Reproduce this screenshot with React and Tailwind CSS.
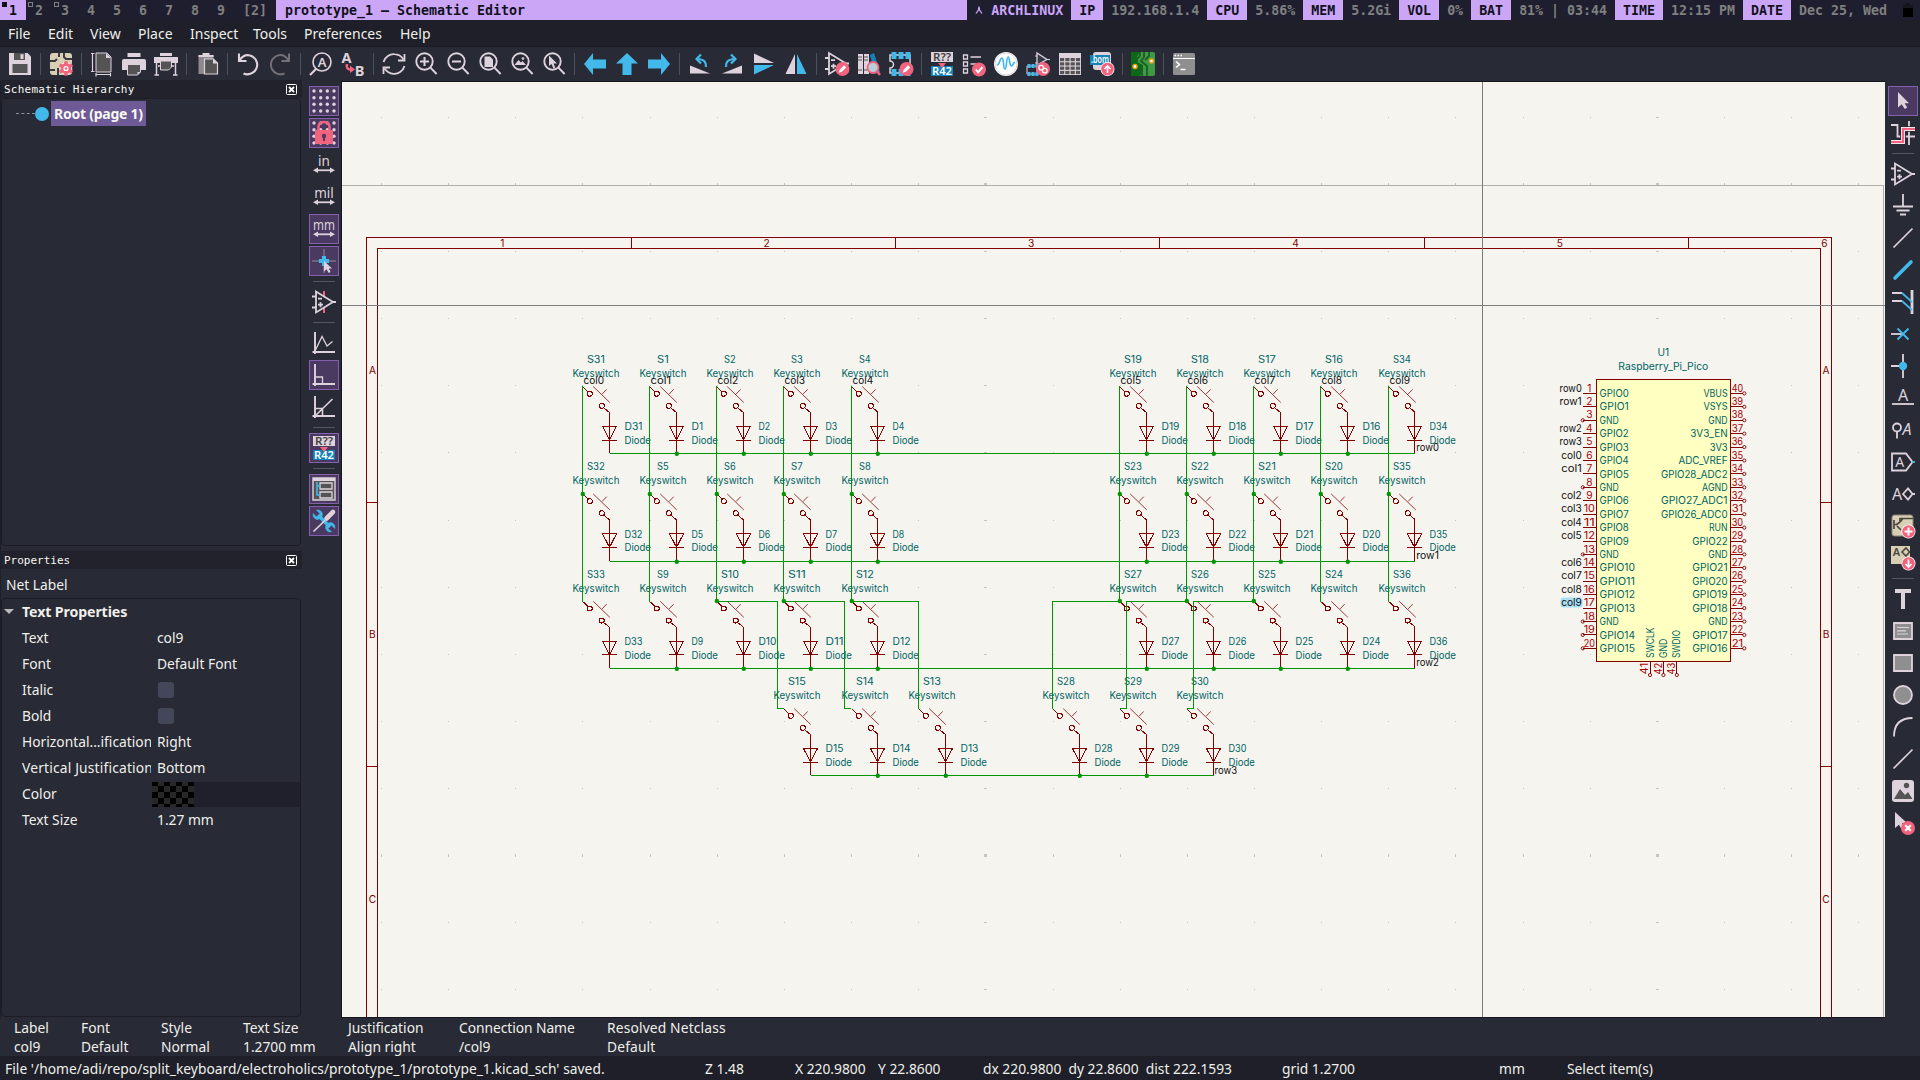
import React from "react";

const L = "#ded3dd";
const R = "#f2647e";
const B = "#42b8eb";
const G = "#545454";
const M = "#8f8f8f";

const Svg = ({ children }) => (
  <svg width="24" height="24" viewBox="0 0 24 24" fill="none" className="block shrink-0 overflow-visible">
    {children}
  </svg>
);
const T = ({ x, y, s = 10, f = L, w = 400, len, i, children }) => (
  <text x={x} y={y} fontSize={s} fill={f} fontWeight={w} textAnchor="middle" fontStyle={i ? "italic" : "normal"} fontFamily='"Noto Sans", sans-serif' textLength={len} lengthAdjust="spacingAndGlyphs">
    {children}
  </text>
);
const Badge = ({ x = 18, y = 18, ring, children }) => (
  <g transform={`translate(${x} ${y})`}>
    <circle r="7" fill={ring ? "#fff" : R} />
    {ring && <circle r="6.3" fill={R} />}
    <g stroke="#fff" strokeWidth="2">{children}</g>
  </g>
);
const Pencil = () => (
  <g>
    <path d="M-2 2L2.6-2.6" strokeWidth="3" />
    <path d="M-3.8 3.8L-2.8 .8L-.8 2.8Z" fill="#fff" stroke="none" />
  </g>
);
const OpAmp = () => (
  <g stroke={L} strokeWidth="1.8">
    <path d="M4 1.5V22.5L21 12Z" />
    <path d="M0 6.5H4M0 17.5H4M20 12H24M6 8.7H10M6 14.7H11M8.5 12.2V17.2" />
  </g>
);
const Lens = ({ children }) => (
  <g>
    <circle cx="10.5" cy="9.5" r="8.2" stroke={L} strokeWidth="1.9" />
    <path d="M16.2 15.4L22.6 22" stroke={L} strokeWidth="2" />
    {children}
  </g>
);
const Annot = () => (
  <g>
    <rect x="1" y="0" width="22" height="10" fill={L} />
    <T x="12" y="9" s="10.5" f="#444" w={600} len="18">R??</T>
    <rect x="1" y="14" width="22" height="10" fill="#1482b8" />
    <T x="12" y="22.8" s="10.5" f="#fff" w={600} len="20">R42</T>
    <path d="M8 11H16L12 16Z" fill={R} />
  </g>
);
const Foot = () => (
  <g>
    <path d="M2 3H22V21H2V16A3.5 3.5 0 0 0 2 9Z" stroke={L} strokeWidth="1.5" fill="#282a36" transform="translate(-1 0)" />
    {[2.5, 9.5, 16.5].map((x) => <path key={x} d={`M${x} 0h5v7h-5zM${x} 17h5v7h-5z`} fill={B} />)}
  </g>
);
const Units = ({ children, len }) => (
  <g>
    <T x="12" y="13" s="13.5" len={len}>{children}</T>
    <path d="M4 17.3H20" stroke={L} strokeWidth="1.8" />
    <path d="M1 17.3L6 14.5V20ZM23 17.3L18 14.5V20Z" fill={L} />
  </g>
);
const dots = [2, 8.7, 15.3, 22];
const Grid = () => dots.map((x) => dots.map((y) => <circle key={x + "-" + y} cx={x} cy={y} r="1.7" fill={L} />));
const Axes = () => <path d="M3 1V23M.5 21H23" stroke={L} strokeWidth="1.9" />;

const icons = {
  save: <g><path d="M1 1H19.5L23 4.5V23H1Z" fill={L} /><path d="M6 1H17V8H6Z" fill={G} /><path d="M12.5 2.2H15.5V7H12.5Z" fill={L} /><path d="M4.5 12H19.5V21H4.5Z" fill={G} /></g>,
  setup: <g><rect x="1" y="1" width="22" height="22" rx="3" fill="#d9cfb5" /><path d="M10 1V5M1 9H6L8 7M15 1V5L17 7H23M9 16V23M1 18H6" stroke="#3a3a3a" strokeWidth="2" /><g transform="translate(17 16.5)"><circle r="5.8" fill={R} stroke="#fff" strokeWidth="1" />{[0, 60, 120, 180, 240, 300].map((a) => <rect key={a} x="-1.8" y="-7.3" width="3.6" height="4" rx=".8" fill={R} transform={`rotate(${a})`} />)}<circle r="2.6" fill="#fff" /><circle r="1.2" fill={R} /></g></g>,
  page: <g><path d="M6 1H17L21 5V20H6Z" fill={G} stroke={L} strokeWidth="1" /><path d="M16 1V6H21Z" fill={L} /><path d="M2.5 1V20M1 1.5H4.5M1 19.5H4.5M6 22.5H20.5M6 21V24.5M20.5 21V24.5" stroke={L} strokeWidth="1.2" /></g>,
  print: <g><path d="M5.5 1H18.5V5H5.5Z" fill={L} /><path d="M2 7H22Q24 7 24 9V18H0V9Q0 7 2 7Z" fill={L} /><path d="M5.5 12.5H18.5V20L15.5 23H5.5Z" fill={G} stroke={L} /><path d="M15.5 23V20H18.5Z" fill={L} /></g>,
  plot: <g><path d="M6 1H18V4H6ZM0 5H24V11H0Z" fill={L} /><path d="M6.5 9H17.5V15L14.5 18H6.5Z" fill={G} stroke={L} /><path d="M2.5 10V23M21.5 10V23M.5 23H5M19 23H23.5M4 14H6M18 14H20" stroke={L} strokeWidth="1.5" /></g>,
  paste: <g transform="translate(1.5 0)"><path d="M2 3H17V22H2Z" fill="#8d898f" /><path d="M6 1H13V4H6Z" fill={L} /><path d="M2 3H17V5H2Z" fill={L} /><path d="M8 7H17L21 11V22H8Z" fill={G} stroke={L} strokeWidth="1.2" /><path d="M16.5 7V11.5H21Z" fill={L} /></g>,
  undo: <g stroke={L} strokeWidth="2.1"><path d="M3 1.5V9H10.5" /><path d="M3.4 8.5C7 3 12 2 16.5 4.5C21 7.5 22.5 13 20 17.2C17.5 21.8 12 23.5 7.5 21.5" /></g>,
  redo: <g stroke="#737078" strokeWidth="2"><path d="M21 1.5V9H13.5" /><path d="M20.6 8.5C17 3 12 2 7.5 4.5C3 7.5 1.5 13 4 17.2C6.5 21.8 12 23.5 16.5 21.5" /></g>,
  find: <g><circle cx="13" cy="10" r="9" stroke={L} strokeWidth="1.6" /><path d="M7 17L1 23" stroke={L} strokeWidth="2.2" /><T x="13" y="14.5" s="13" w={600}>A</T></g>,
  replace: <g><T x="5.5" y="10.5" s="14.5" w={700}>A</T><T x="18.5" y="23.5" s="14.5" w={700}>B</T><path d="M6 12C5 17 8 18 11 17.5" stroke={R} strokeWidth="2.5" /><path d="M9 13.5L14 17.5L9 21Z" fill={R} /></g>,
  refresh: <g stroke={L} strokeWidth="1.8"><path d="M1.5 10C3 4.5 8 1.8 12.5 2.2C16.5 2.4 19.5 4.5 21.5 7.5M22.5 14C21 19.5 16 22.2 11.5 21.8C7.5 21.6 4.5 19.5 2.5 16.5" /><path d="M22.5 2V8.5H16M1.5 22V15.5H8" /></g>,
  zin: <Lens><path d="M6 9.5H15M10.5 5V14" stroke={L} strokeWidth="2" /></Lens>,
  zout: <Lens><path d="M6 9.5H15" stroke={L} strokeWidth="2" /></Lens>,
  zfit: <Lens><path d="M6.5 4.5H12L15 7.5V15H6.5Z" fill={L} /></Lens>,
  zobj: <Lens><path d="M4.5 13L8.5 8L11 10.5L12.5 9L16 13Z" fill={L} /><circle cx="13" cy="6.5" r="1.3" fill={L} /></Lens>,
  zsel: <Lens><path d="M7 3.5V14L9.5 12L11.5 16.5L13.3 15.6L11.4 11.5H15Z" fill={L} /></Lens>,
  left: <path d="M1 12L10 1V7.5H23V16.5H10V23Z" fill={B} />,
  up: <path d="M12 1L23 11.5H16.5V23H7.5V11.5H1Z" fill={B} />,
  right: <path d="M23 12L14 1V7.5H1V16.5H14V23Z" fill={B} />,
  rccw: <g><path d="M2 13.5V21.5H22Z" fill={L} /><path d="M18 15C18.5 10.5 16 7 9.5 7" stroke={B} strokeWidth="2.2" /><path d="M13 2.5L8.5 7L13 11.5" stroke={B} strokeWidth="2.2" /></g>,
  rcw: <g><path d="M22 13.5V21.5H2Z" fill={L} /><path d="M6 15C5.5 10.5 8 7 14.5 7" stroke={B} strokeWidth="2.2" /><path d="M11 2.5L15.5 7L11 11.5" stroke={B} strokeWidth="2.2" /></g>,
  mv: <g><path d="M2 1.5V11L22 11Z" fill={L} /><path d="M2 22.5V13L22 13Z" fill={B} /></g>,
  mh: <g><path d="M1.5 22V22L11 2V22Z" fill={L} /><path d="M22.5 22L13 2V22Z" fill={B} /></g>,
  symed: <g><g transform="translate(0 -.5)"><OpAmp /></g><Badge x={17.5} y={17}><Pencil /></Badge></g>,
  lib: <g><path d="M1 2H6V22H1ZM7 2H12V22H7Z" fill={L} /><path d="M1 5H5M1 8H5M1 18H5M7 5H11M7 8H11M7 18H11" stroke={G} strokeWidth="1.2" /><path d="M13 3L17 1L23 20L18 22Z" fill="#1482b8" /><path d="M19 18L23 23" stroke={R} strokeWidth="2.5" /><circle cx="16" cy="15.5" r="5.5" fill="#b9ced8" stroke={R} strokeWidth="1.8" /></g>,
  fped: <g><Foot /><Badge x={17.5} y={17}><Pencil /></Badge></g>,
  annot: <Annot />,
  erc: <g><path d="M1.5 3H5.5V7H1.5ZM1.5 10H5.5V14H1.5ZM1.5 17H5.5V21H1.5ZM8.5 5H19M8.5 12H14" stroke={L} strokeWidth="1.3" /><Badge x={17} y={17.5}><path d="M-3.2 0L-.8 2.8L3.5-2.5" /></Badge></g>,
  sim: <g><circle cx="12" cy="12" r="12" fill="#fff" /><circle cx="12" cy="12" r="11" stroke={L} strokeWidth="1" /><path d="M3 13C6 13 5.5 6 8 6C10 6 9 17 11 17C13 17 12 5 14.2 5C16 5 15 14 17.5 14C19 14 19 11 21 10" stroke={B} strokeWidth="1.7" /></g>,
  link: <g><path d="M11 1V13L21 7.5Z" fill="#343d47" stroke={L} strokeWidth="1.3" /><path d="M9 4H11M9 11H11M21 7.5H24" stroke={L} /><path d="M1 14H11V22H1Z" stroke={L} />{[1.5, 5.5, 9.5].map((x) => <path key={x} d={`M${x} 12h3v4h-3zM${x} 20h3v4h-3z`} fill={B} />)}<Badge x={17} y={17}><g strokeWidth="1.3"><rect x="-4" y="-3.6" width="4.5" height="4.5" rx="2" /><rect x="-.5" y="-.6" width="4.5" height="4.5" rx="2" /></g></Badge></g>,
  table: <g><path d="M1 1H23V23H1Z" fill={L} />{[2, 7.3, 12.6, 17.9].map((x) => [6, 10.3, 14.6, 18.9].map((y) => <rect key={x + "/" + y} x={x} y={y} width="4.2" height="3.2" fill={G} />))}</g>,
  bom: <g><rect x="3" y="0" width="18" height="18" rx="3" fill={L} /><path d="M0 3H20V13H0Z" fill="#1482b8" /><T x="10" y="11" s="10" f="#fff" w={600} len="18">.bom</T><Badge x={17.5} y={17} ring><path d="M0 4V-3M-3 0L0-3L3 0" strokeWidth="1.6" /></Badge></g>,
  pcb: <g><rect x="0" y="0" width="24" height="24" rx="2" fill="#3f9a46" /><path d="M0 2Q0 0 2 0H9L6 5V10L12 13V18L9 24H2Q0 24 0 22Z" fill="#0b6a14" /><path d="M9 0V4L6 7V10M13 0V5L10 9L16 14V24M18 0V4L14 8M4 18L11 18V24" stroke="#1d5c26" strokeWidth="1.8" /><circle cx="4" cy="14.5" r="2" fill="#fff" stroke="#e8a020" strokeWidth="1.5" /><circle cx="20.5" cy="9" r="2" fill="#fff" stroke="#e8a020" strokeWidth="1.5" /></g>,
  console: <g><rect x="1" y="1" width="22" height="22" rx="1.5" fill={M} /><path d="M1 6.5H23" stroke="#fff" strokeWidth="1" /><path d="M2.5 3.5H4M5.5 3.5H7M8.5 3.5H10" stroke="#fff" strokeWidth="1.4" /><path d="M4 9.5L7.5 12.5L4 15.5M8.5 17.5H13.5" stroke="#fff" strokeWidth="1.6" /></g>,

  grid: <Grid />,
  lock: <g><Grid /><path d="M6.5 11V6Q6.5 1 12 1Q17.5 1 17.5 6V11" stroke={R} strokeWidth="2.5" /><rect x="3" y="9" width="18" height="14" rx="1.5" fill={R} /><circle cx="12" cy="15" r="2.2" fill="#4d3861" /><path d="M11 15H13V20H11Z" fill="#4d3861" /></g>,
  inch: <Units>in</Units>,
  mil: <Units>mil</Units>,
  mm: <Units len={22}>mm</Units>,
  cursor: <g><path d="M0 12H24M12 0V24" stroke={M} strokeWidth="1" /><path d="M7 12H17M12 7V17" stroke={B} strokeWidth="4" /><path d="M12 12V22.5L14.5 20.2L16.8 24L18.6 23L16.8 19.5H20Z" fill={L} /></g>,
  hidden: <g><path d="M12 1V23" stroke={R} strokeWidth="2" /><path d="M4 2V22L20 12Z" fill="#282a36" /><path d="M12 4V6M12 18V20" stroke={R} strokeWidth="2" /><OpAmp /></g>,
  free: <g><Axes /><path d="M3 20L10 5.5L15 15L20.5 10.5" stroke={L} strokeWidth="1.3" /></g>,
  ortho: <g><Axes /><path d="M3 14H10.5V21" stroke={L} strokeWidth="1.3" /></g>,
  diag: <g><Axes /><path d="M3 21L20.5 4M3 13.5H10.5V21" stroke={L} strokeWidth="1.6" /></g>,
  tree: <g><path d="M1 1H23V23H1Z" fill={G} stroke={L} strokeWidth="1.4" /><path d="M1 1H23V4H1Z" fill={L} /><path d="M8 6H20V12H8ZM8 15H20V21H8Z" stroke={L} strokeWidth="1.3" /><path d="M8 9H5V18H8M5 5V9" stroke={B} strokeWidth="1.6" /></g>,
  tools: <g><path d="M6 6L18 18" stroke={B} strokeWidth="3.6" /><path d="M4.5 1.2L8 4.6L7.5 7.5L4.6 8L1.2 4.5A4.6 4.6 0 0 0 7.5 10L10 7.5A4.6 4.6 0 0 0 4.5 1.2ZM19.5 22.8L16 19.4L16.5 16.5L19.4 16L22.8 19.5A4.6 4.6 0 0 0 16.5 14L14 16.5A4.6 4.6 0 0 0 19.5 22.8Z" fill={B} stroke={B} strokeWidth=".6" /><path d="M1.5 22.5L13 11.5" stroke={L} strokeWidth="1.7" /><path d="M14.5 9.5L21 3" stroke={L} strokeWidth="4.6" strokeLinecap="round" /></g>,

  pointer: <path d="M7 3V18.5L10.7 15.3L13.8 20L16.2 18.6L13.6 14.2H18Z" fill={L} />,
  hl: <g><path d="M0 4H6.5V15.5H24M18 0V24" stroke={L} strokeWidth="1.8" /><path d="M0 21H12V8H24" stroke="#282a36" strokeWidth="5.6" /><path d="M0 21H12V8H24" stroke="#f3e6ea" strokeWidth="4" /><path d="M0 21H12V8H24" stroke={R} strokeWidth="2.2" /></g>,
  opamp: <OpAmp />,
  gnd: <path d="M12 0V12M2 12.5H22M5.5 16.5H18.5M9 20.5H15" stroke={L} strokeWidth="1.8" />,
  line: <path d="M2.5 21.5L21.5 2.5" stroke={L} strokeWidth="1.7" />,
  bus: <path d="M4 20L20 4" stroke={B} strokeWidth="3.6" strokeLinecap="round" />,
  entry: <g><path d="M21 0V24" stroke={L} strokeWidth="2.8" /><path d="M1 3H11M1 11H11" stroke={L} strokeWidth="1.8" /><path d="M11 3L21 12M11 11L21 20" stroke={B} strokeWidth="1.8" /></g>,
  nc: <g><path d="M0 12H12" stroke={L} strokeWidth="1.8" /><path d="M6.5 6.5L17.5 17.5M6.5 17.5L17.5 6.5" stroke={B} strokeWidth="1.9" /></g>,
  junc: <g><path d="M0 12H12M12 0V24" stroke={L} strokeWidth="1.8" /><circle cx="12" cy="12" r="4.2" fill={B} /></g>,
  label: <g><T x="12" y="15" s="16">A</T><path d="M1 18H23" stroke={L} strokeWidth="1.8" /></g>,
  ncls: <g><circle cx="6" cy="9.5" r="4" stroke={L} strokeWidth="1.8" /><path d="M6 13.5V20.5" stroke={L} strokeWidth="1.8" /><T x="16" y="17" s="16" i>A</T></g>,
  glabel: <g><path d="M1 3.5H15L21.5 12L15 20.5H1Z" stroke={L} strokeWidth="1.8" /><path d="M21 12H24" stroke={B} strokeWidth="1.8" /><T x="8.7" y="17" s="14">A</T></g>,
  hlabel: <g><T x="6" y="17.5" s="16">A</T><path d="M12 12L17 6.5L21.5 12L17 17.5ZM21 12H24" stroke={L} strokeWidth="1.8" /></g>,
  sheet: <g><rect x="1" y="1" width="21" height="21" rx="2.5" fill="#d9cfb5" stroke="#8b8578" /><path d="M3 6V15M3 10.5H6M9 8L5 11M6 12L10 16M9 7V4.5H22M9 8L12 4.5" stroke="#4a473f" strokeWidth="1.7" /><Badge x={17.5} y={17.5} ring><path d="M-4 0H4M0-4V4" /></Badge></g>,
  sheetpin: <g><path d="M0 0H19V18H0Z" fill="#d9cfb5" /><T x="5.5" y="10" s="11" f="#4a473f" w={600}>A</T><path d="M11 6L15 2L18.5 6L15 10Z" stroke="#4a473f" strokeWidth="1.6" /><Badge x={17.5} y={17.5} ring><path d="M0-4V3M-3 0.5L0 3.5L3 0.5" strokeWidth="1.7" /></Badge></g>,
  text: <path d="M4 2H20V6H14V22H10V6H4Z" fill={L} />,
  textbox: <g><path d="M3 4H21V20H3Z" fill={M} stroke={L} strokeWidth="1.8" /><path d="M6 8.5H18M6 11.8H15M6 15H17" stroke={L} strokeWidth="1.2" /></g>,
  rect: <path d="M3 4H21V20H3Z" fill={M} stroke={L} strokeWidth="1.8" />,
  circle: <circle cx="12" cy="12" r="9" fill={M} stroke={L} strokeWidth="1.8" />,
  arc: <path d="M3 21.5C3 9 10 3 21.5 3" stroke={L} strokeWidth="1.8" />,
  image: <g><rect x="1" y="1" width="22" height="22" rx="3" fill={L} /><path d="M3 20L9 10L14 16L17 13L21.5 20Z" fill={G} /><circle cx="15.5" cy="6.5" r="2.7" fill={G} /></g>,
  del: <g><path d="M4 1V17L8 13.7L11 19L14 17.5L11 12H16Z" fill={L} /><Badge x={17} y={17}><path d="M-2.8-2.8L2.8 2.8M-2.8 2.8L2.8-2.8" /></Badge></g>,
};

const topBar = "save | setup | page print plot | paste | undo redo | find replace | refresh zin zout zfit zobj zsel | left up right | rccw rcw mv mh | symed lib fped | annot erc sim link table bom | pcb | console".split(" ");
const leftBar = "grid lock inch mil mm cursor | hidden | free ortho diag | annot | tree tools".split(" ");
const leftOn = ["grid", "lock", "mm", "cursor", "ortho", "annot", "tree", "tools"];
const rightBar = "pointer hl | opamp gnd line bus entry nc junc label ncls glabel hlabel sheet sheetpin | text textbox rect circle arc line image del".split(" ");

const Tool = ({ name, on }) => (
  <div className={`flex size-[30px] shrink-0 items-center justify-center ${on ? "border border-[#8460ae] bg-[#4a3960]" : ""}`}>
    <Svg>{icons[name]}</Svg>
  </div>
);

const VBar = ({ items, on, className }) => (
  <div className={`flex shrink-0 flex-col items-center gap-[2px] bg-[#282a36] pt-[5px] ${className}`}>
    {items.map((n, i) =>
      n === "|" ? (
        <div key={i} className="flex h-[7px] w-[22px] shrink-0 items-center"><div className="h-px w-full bg-[#555661]" /></div>
      ) : (
        <Tool key={i} name={n} on={on.includes(n)} />
      )
    )}
  </div>
);

/* ---------- schematic ---------- */
const RED = "#840000";
const TEAL = "#006464";
const WIRE = "#009600";
const P = 67.13;
const colX = (i) => Math.round(582 + P * i) + 0.5;
const diodeX = (i) => Math.round(608.9 + P * i) + 0.5;
const rowY = [386.5, 493.9, 601.3, 708.6];
const netY = [453.5, 561.5, 668.5, 775.5];

const charWidth = (c) => (/[GNO]/.test(c) ? 6.9 : c === "P" ? 6.6 : c === "I" ? 3.3 : 6.25);
const textWidth = (s) => [...s].reduce((a, c) => a + charWidth(c), 0) - 0.8;

const K = ({ x, y, a = "start", f = TEAL, w, rot, children }) => (
  <text x={x} y={y} textAnchor={a} fill={f} textLength={children.length > 1 ? w || textWidth(children) : undefined} lengthAdjust="spacingAndGlyphs" transform={rot ? `rotate(-90 ${x} ${y})` : undefined}>
    {children}
  </text>
);

const placed = [
  [[0, 31], [1, 1], [2, 2], [3, 3], [4, 4], [8, 19], [9, 18], [10, 17], [11, 16], [12, 34]],
  [[0, 32], [1, 5], [2, 6], [3, 7], [4, 8], [8, 23], [9, 22], [10, 21], [11, 20], [12, 35]],
  [[0, 33], [1, 9], [2, 10], [3, 11], [4, 12], [8, 27], [9, 26], [10, 25], [11, 24], [12, 36]],
  [[3, 15], [4, 14], [5, 13], [7, 28], [8, 29], [9, 30]],
];
const cols = [0, 1, 2, 3, 4, 8, 9, 10, 11, 12];

const Key = ({ x, dx, y, n }) => (
  <g>
    <g stroke={RED} fill="none" shapeRendering="crispEdges">
      <g transform={`translate(${x} ${y})`}>
        <path d="M0 0L5.3 5M21.2 21.2L26.5 25.6" />
        <path d="M10.7 0L27.3 16M19.6 7.6L24.2 2.8" stroke="#9c3a3a" shapeRendering="auto" />
        <circle cx="7.3" cy="7.2" r="2.5" />
        <circle cx="19.3" cy="19.3" r="2.5" />
      </g>
      <g transform={`translate(${dx} ${y})`}>
        <path d="M-7 39.9H7L0 53.4Z" />
        <path d="M0 25.6V66.8M-7.3 53.7H7.3" />
      </g>
    </g>
    <K x={x + 13.4} y={y - 23.5} a="middle">{"S" + n}</K>
    <K x={x + 13.4} y={y - 9.8} a="middle" w={47}>Keyswitch</K>
    <K x={dx + 15} y={y + 43.8}>{"D" + n}</K>
    <K x={dx + 15} y={y + 57.2} w={26.4}>Diode</K>
  </g>
);

const leftPins = ["GPIO0", "GPIO1", "GND", "GPIO2", "GPIO3", "GPIO4", "GPIO5", "GND", "GPIO6", "GPIO7", "GPIO8", "GPIO9", "GND", "GPIO10", "GPIO11", "GPIO12", "GPIO13", "GND", "GPIO14", "GPIO15"];
const rightPins = ["VBUS", "VSYS", "GND", "3V3_EN", "3V3", "ADC_VREF", "GPIO28_ADC2", "AGND", "GPIO27_ADC1", "GPIO26_ADC0", "RUN", "GPIO22", "GND", "GPIO21", "GPIO20", "GPIO19", "GPIO18", "GND", "GPIO17", "GPIO16"];
const nets = ["row0", "row1", "", "row2", "row3", "col0", "col1", "", "col2", "col3", "col4", "col5", "", "col6", "col7", "col8", "col9", "", "", ""];
const PIN = "#a90000";

const Pico = () => (
  <g>
    <K x={1663.3} y={356.3} a="middle">U1</K>
    <K x={1663.3} y={370} a="middle" w={90}>Raspberry_Pi_Pico</K>
    <rect x="1596.5" y="379.5" width="134" height="282" fill="#ffffc2" stroke={RED} shapeRendering="crispEdges" />
    <rect x="1560.5" y="597.5" width="22" height="10" rx="3" fill="#a8def7" />
    {leftPins.map((p, i) => {
      const y = 393.4 + 13.42 * i;
      return (
        <g key={i}>
          <path d={`M1582.5 ${y}H1596`} stroke={RED} shapeRendering="crispEdges" />
          {!nets[i] && <circle cx="1582.8" cy={y} r="1.6" fill="none" stroke={RED} strokeWidth=".9" />}
          <K x={1589.3} y={y - 1.8} a="middle" f={PIN} w={11.2}>{String(i + 1)}</K>
          <K x={1599.6} y={y + 3.6}>{p}</K>
          {nets[i] && <K x={1581.8} y={y - 1.8} a="end" f="#0f0f0f" w={nets[i][0] === "r" ? 22.2 : 20.6}>{nets[i]}</K>}
        </g>
      );
    })}
    {rightPins.map((p, i) => {
      const y = 393.4 + 13.42 * i;
      return (
        <g key={i}>
          <path d={`M1731 ${y}H1743`} stroke={RED} shapeRendering="crispEdges" />
          <circle cx="1744.3" cy={y} r="1.6" fill="none" stroke={RED} strokeWidth=".9" />
          <K x={1737.4} y={y - 1.8} a="middle" f={PIN} w={11.4}>{String(40 - i)}</K>
          <K x={1727.6} y={y + 3.6} a="end">{p}</K>
        </g>
      );
    })}
    {["SWCLK", "GND", "SWDIO"].map((p, i) => {
      const x = 1650 + 13.42 * i;
      return (
        <g key={p}>
          <path d={`M${x} 662V674`} stroke={RED} shapeRendering="crispEdges" />
          <circle cx={x} cy="675" r="1.6" fill="none" stroke={RED} strokeWidth=".9" />
          <K x={x + 3.6} y={658} rot>{p}</K>
          <K x={x - 1.6} y={668.6} a="middle" f={PIN} rot>{String(41 + i)}</K>
        </g>
      );
    })}
  </g>
);

const Schematic = () => {
  const gx = Array.from({ length: 23 }, (_, i) => 381 + 67.15 * i);
  const gy = Array.from({ length: 14 }, (_, i) => 117.3 + 67.13 * i);
  const junctions = [];
  cols.forEach((c) => junctions.push([colX(c) + 0.3, 494]));
  [2, 3, 4, 8, 9, 10].forEach((c) => junctions.push([colX(c) + 0.3, 601]));
  placed.forEach((row, r) => row.slice(1, -1).forEach(([c]) => junctions.push([diodeX(c) + 0.3, netY[r] + 0.2])));
  return (
    <svg width="1543" height="935" viewBox="342 82 1543 935" className="block bg-[#f5f4ef]" fontFamily="Inter, sans-serif" fontSize="10.2">
      <g fill="#c6c5c1" shapeRendering="crispEdges">
        {gx.map((x, i) => gy.map((y, j) => <rect key={i + "." + j} x={Math.round(x) - (i % 10 === 9 ? 1 : 0)} y={Math.floor(y) - (j % 10 === 1 ? 1 : 0)} width={i % 10 === 9 ? 3 : 1} height={j % 10 === 1 ? 3 : 1} />))}
      </g>
      <path d="M342 185.5H1883.5V1017" fill="none" stroke="#b0afab" shapeRendering="crispEdges" />
      <g fill="none" stroke={RED} shapeRendering="crispEdges">
        <path d="M366.5 1018V237.5H1831.5V1018M377.5 1018V248.5H1820.5V1018" />
        {[631.5, 895.5, 1159.5, 1424.5, 1688.5].map((x) => <path key={x} d={`M${x} 237.5V248.5`} />)}
        {[502.5, 766.5].map((y) => <path key={y} d={`M366.5 ${y}H377.5M1820.5 ${y}H1831.5`} />)}
      </g>
      {[1, 2, 3, 4, 5, 6].map((n) => <K key={n} x={502.3 + 264.4 * (n - 1)} y={246.7} a="middle" f={RED}>{String(n)}</K>)}
      {["A", "B", "C"].map((n, i) => (
        <g key={n}>
          <K x={372.4} y={373.8 + 264.4 * i} a="middle" f={RED}>{n}</K>
          <K x={1826} y={373.8 + 264.4 * i} a="middle" f={RED}>{n}</K>
        </g>
      ))}
      <Pico />
      {placed.map((row, r) => row.map(([c, n]) => <Key key={n} x={colX(c)} dx={diodeX(c)} y={rowY[r]} n={n} />))}
      <g fill="none" stroke={WIRE} shapeRendering="crispEdges">
        {cols.map((c) => <path key={c} d={`M${colX(c)} 386V601.5`} />)}
        {[0, 1, 2].map((r) => <path key={r} d={`M609.5 ${netY[r]}H1415`} />)}
        <path d="M810.5 775.5H1213.5M717 601.5H777.5V708.5H784M784 601.5H844.5V708.5H851M851.5 601.5H918.5V709M1120 601.5H1052.5V709M1187 601.5H1126.5V708.5H1119.5M1254 601.5H1193.5V708.5H1186.5" />
      </g>
      {junctions.map(([x, y], i) => <circle key={i} cx={x} cy={y} r="2.2" fill={WIRE} />)}
      {cols.map((c, i) => <K key={c} x={colX(c) + 1} y={384} f="#0f0f0f" w={20.6}>{"col" + i}</K>)}
      {[0, 1, 2].map((r) => <K key={r} x={1416.3} y={netY[r] - 2.2} f="#0f0f0f" w={22.6}>{"row" + r}</K>)}
      <K x={1214.5} y={773.5} f="#0f0f0f" w={22.6}>row3</K>
      <path d="M342 305.5H1885M1482.5 82V1017" stroke="#7c7c7a" fill="none" shapeRendering="crispEdges" />
    </svg>
  );
};

/* ---------- window chrome ---------- */
const stats = [["IP", "192.168.1.4"], ["CPU", "5.86%"], ["MEM", "5.2Gi"], ["VOL", "0%"], ["BAT", "81% | 03:44"], ["TIME", "12:15 PM"], ["DATE", "Dec 25, Wed"]];

const SystemBar = () => (
  <div className="flex h-5 shrink-0 bg-[#1e1e2e] font-['DejaVu_Sans_Mono',monospace] text-[13.29px] leading-[21px] font-bold whitespace-pre text-[#808080]">
    {[1, 2, 3, 4, 5, 6, 7, 8, 9].map((n) => (
      <div key={n} className={`relative w-[26px] text-center ${n === 1 ? "bg-[#cba6f7] text-[#11111b]" : ""}`}>
        {n < 4 && <span className={`absolute top-[2px] left-[2px] size-[5px] border ${n === 1 ? "border-[#11111b] bg-[#11111b]" : "border-[#808080]"}`} />}
        {n}
      </div>
    ))}
    <div className="w-[42px] pl-[9px]">[2]</div>
    <div className="flex-1 bg-[#cba6f7] pl-[9px] text-[#11111b]">prototype_1 — Schematic Editor</div>
    <div className="flex w-[104px] items-center pl-2 text-[#cba6f7]">
      <svg width="8" height="8" viewBox="0 0 8 8" className="mr-2"><path d="M4 .5L4 4M4 1L3.4 4L1 7.5M4 1L4.6 4L7 7.5" stroke="#cba6f7" strokeWidth="1.3" fill="none" /></svg>
      ARCHLINUX
    </div>
    {stats.map(([k, v]) => (
      <React.Fragment key={k}>
        <div className="bg-[#cba6f7] px-2 text-[#11111b]">{k}</div>
        <div className="px-2">{v}</div>
      </React.Fragment>
    ))}
    <div className="flex w-[25px] flex-col items-center pt-[3px]">
      <div className="h-[2px] w-[5px] bg-[#15151f]" />
      <div className="h-[3px] w-[10px] bg-[#15151f]" />
      <div className="h-[9px] w-[10px] bg-black" />
    </div>
  </div>
);

const PanelHead = ({ children, className }) => (
  <div className={`flex h-[18px] shrink-0 items-center justify-between bg-[#21222c] pr-[5px] pl-[3px] font-['DejaVu_Sans_Mono',monospace] text-[11px] leading-none text-[#f8f8f2] ${className}`}>
    <span>{children}</span>
    <svg width="11" height="11" viewBox="0 0 11 11"><rect x=".5" y=".5" width="10" height="10" rx="1" fill="none" stroke="#fff" /><path d="M3 3L8 8M3 8L8 3" stroke="#fff" strokeWidth="1.8" /></svg>
  </div>
);

const Check = () => <div className="ml-px size-4 rounded-[3px] bg-[#44475a]" />;
const props = [["Text", "col9"], ["Font", "Default Font"], ["Italic", <Check />], ["Bold", <Check />], ["Horizontal...ification", "Right"], ["Vertical Justification", "Bottom"], ["Color", null], ["Text Size", "1.27 mm"]];

const Swatch = () => (
  <svg width="42" height="25" viewBox="0 0 42 25" shapeRendering="crispEdges" className="block">
    <rect width="42" height="25" fill="#000" />
    {Array.from({ length: 35 }, (_, i) => [i % 7, Math.floor(i / 7)]).filter(([a, b]) => (a + b) % 2 === 1).map(([a, b]) => <rect key={a + "," + b} x={a * 6} y={b * 6 - 2} width="6" height="6" fill="#272727" />)}
  </svg>
);

const SidePanel = () => (
  <div className="flex w-[302px] shrink-0 flex-col border-l border-[#1e1f29]">
    <PanelHead className="-mt-px tracking-[0.25px]">Schematic Hierarchy</PanelHead>
    <div className="mr-px flex h-[448px] shrink-0 items-start rounded border border-[#1b1c26] pt-[2px] pl-[14px]">
      <div className="mt-[12px] w-[19px] border-t border-dashed border-[#8d8e95]" />
      <div className="mt-[6px] size-[14px] rounded-full bg-[#42b8eb]" />
      <div className="ml-[2px] h-[25px] bg-[#6d5a96] px-[3px] text-[14px] leading-[25px] font-bold tracking-[-0.25px] text-[#f8f8f2]">Root (page 1)</div>
    </div>
    <PanelHead className="mt-[5px] border-t border-[#1e1f29]">Properties</PanelHead>
    <div className="h-[29px] shrink-0 pl-[5px] leading-[31px]">Net Label</div>
    <div className="mr-px mb-px flex-1 rounded border border-[#1b1c26]">
      <div className="flex h-[26px] items-center pb-px text-[14.2px] font-bold">
        <div className="ml-[2px] h-0 w-0 border-x-[5px] border-t-[5px] border-x-transparent border-t-[#b9b9b9]" />
        <span className="ml-[8px] tracking-[-0.12px]">Text Properties</span>
      </div>
      {props.map(([k, v]) => (
        <div key={k} className="flex h-[26px] items-center">
          <div className={`w-[149px] shrink-0 overflow-hidden pl-5 whitespace-nowrap ${k[0] === "V" ? "tracking-[0.18px]" : ""}`}>{k}</div>
          {k === "Color" ? (
            <div className="ml-px flex-1 bg-[#1f202b]"><Swatch /></div>
          ) : (
            <div className="pl-[6px]">{v}</div>
          )}
        </div>
      ))}
    </div>
  </div>
);

const info = [["Label", "col9", "w-[67px]"], ["Font", "Default", "w-[80px]"], ["Style", "Normal", "w-[82px]"], ["Text Size", "1.2700 mm", "w-[105px]"], ["Justification", "Align right", "w-[111px]"], ["Connection Name", "/col9", "w-[148px] tracking-[-0.05px]"], ["Resolved Netclass", "Default", "w-[200px] tracking-[0.15px]"]];
const menu = [["File", "w-[40px]"], ["Edit", "w-[42px]"], ["View", "w-[48px]"], ["Place", "w-[52px]"], ["Inspect", "w-[63px]"], ["Tools", "w-[51px]"], ["Preferences", "w-[96px]"], ["Help", "w-[40px]"]];

export default function App() {
  return (
    <div className="flex h-[1080px] w-[1920px] flex-col overflow-hidden bg-[#282a36] font-['Noto_Sans',sans-serif] text-[13.8px] text-[#f0f0ea]">
      <SystemBar />
      <div className="flex h-[27px] shrink-0 items-center border-b border-[#191a23] bg-[#1e1f29] pl-2 text-[14px]">
        {menu.map(([m, w]) => <div key={m} className={w}>{m}</div>)}
      </div>
      <div className="flex h-[34px] shrink-0 items-center gap-[2px] pl-[5px]">
        {topBar.map((n, i) =>
          n === "|" ? <div key={i} className="flex h-[22px] w-[7px] justify-center"><div className="h-full w-px bg-[#4d4e59]" /></div> : <Tool key={i} name={n} />
        )}
      </div>
      <div className="flex h-[937px] shrink-0">
        <SidePanel />
        <VBar items={leftBar} on={leftOn} className="w-[39px] pl-[5px]" />
        <div className="w-[1544px] shrink-0 border-y border-l border-[#15161e]"><Schematic /></div>
        <VBar items={rightBar} on={["pointer"]} className="w-[35px] pl-px" />
      </div>
      <div className="flex h-[38px] shrink-0 pl-[14px] leading-[18.5px]">
        {info.map(([a, b, w]) => <div key={a} className={`pt-px ${w}`}><div>{a}</div><div>{b}</div></div>)}
      </div>
      <div className="flex h-6 shrink-0 items-center bg-[#1e1f29] pt-[2px] pl-[5px] whitespace-pre">
        <div className="w-[700px] tracking-[0.035px]">File '/home/adi/repo/split_keyboard/electroholics/prototype_1/prototype_1.kicad_sch' saved.</div>
        <div className="w-[90px]">Z 1.48</div>
        <div className="w-[83px]">X 220.9800</div>
        <div className="w-[105px]">Y 22.8600</div>
        <div className="w-[299px]">dx 220.9800  dy 22.8600  dist 222.1593</div>
        <div className="w-[217px]">grid 1.2700</div>
        <div className="w-[68px]">mm</div>
        <div>Select item(s)</div>
      </div>
    </div>
  );
}
